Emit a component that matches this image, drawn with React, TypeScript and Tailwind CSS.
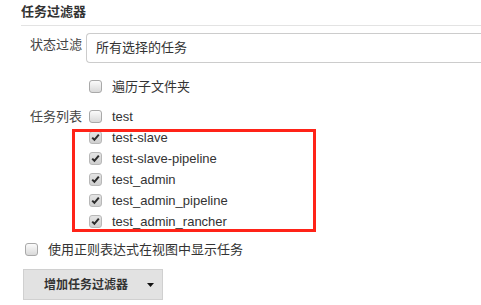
import React from 'react'

const JOBS = [
  { name: 'test', checked: false },
  { name: 'test-slave', checked: true },
  { name: 'test-slave-pipeline', checked: true },
  { name: 'test_admin', checked: true },
  { name: 'test_admin_pipeline', checked: true },
  { name: 'test_admin_rancher', checked: true },
]

function Box({ checked }: { checked?: boolean }) {
  return (
    <span
      className={
        checked
          ? 'flex w-[13px] h-[13px] shrink-0 items-center justify-center rounded-[3px] border border-[#b8b8b8] bg-gradient-to-b from-[#e4e4e4] to-[#cfcfcf]'
          : 'flex w-[13px] h-[13px] shrink-0 items-center justify-center rounded-[3px] border border-[#a9a9a9] bg-gradient-to-b from-[#fbfbfb] to-[#d9d9d9]'
      }
    >
      {checked && (
        <svg width="9" height="9" viewBox="0 0 9 9">
          <path d="M1.2 4.6 L3.4 6.8 L7.8 1.6" stroke="#2b2b2b" strokeWidth="2" fill="none" />
        </svg>
      )}
    </span>
  )
}

export default function App() {
  return (
    <div className="relative w-[481px] h-[305px] overflow-hidden bg-white text-[13px] text-[#333] font-['Liberation_Sans','Noto_Sans_CJK_SC',sans-serif]">
      {/* Section header */}
      <div className="ml-[21px] h-[26px] border-b border-[#e3e3e3] pt-[3px] leading-[18px] font-bold">
        任务过滤器
      </div>

      {/* Status filter */}
      <div className="mt-[7px] flex">
        <div className="w-[82px] pt-[3px] text-right leading-[18px] text-[#444]">状态过滤</div>
        <div className="ml-[4px] flex h-[30px] flex-1 items-center rounded-l-[4px] border border-r-0 border-[#cccccc] pl-[9px]">
          所有选择的任务
        </div>
      </div>

      <div className="mt-[13px] ml-[89px] flex h-[21px] items-center gap-[10px]">
        <Box />
        <span>遍历子文件夹</span>
      </div>

      {/* Job list */}
      <div className="mt-[9px] flex">
        <div className="w-[82px] text-right leading-[21px] text-[#444]">任务列表</div>
        <div className="ml-[7px] flex flex-col">
          {JOBS.map(j => (
            <div key={j.name} className="flex h-[21px] items-center gap-[10px]">
              <Box checked={j.checked} />
              <span>{j.name}</span>
            </div>
          ))}
        </div>
      </div>

      <div className="mt-[7px] ml-[25px] flex h-[21px] items-center gap-[10px]">
        <Box />
        <span>使用正则表达式在视图中显示任务</span>
      </div>

      <div className="mt-[9px] ml-[23px] flex h-[31px] w-[140px] items-center border border-[#d0d0d0] bg-[#e2e2e2] pl-[20px] text-[12px] font-semibold text-[#333]">
        <span>增加任务过滤器</span>
        <svg className="ml-[19px]" width="7" height="4" viewBox="0 0 7 4">
          <path d="M0 0 L7 0 L3.5 4 Z" fill="#111" />
        </svg>
      </div>

      {/* annotation box */}
      <div className="absolute left-[72px] top-[129px] h-[103px] w-[244px] border-[3px] border-[#ff2318]" />
    </div>
  )
}
